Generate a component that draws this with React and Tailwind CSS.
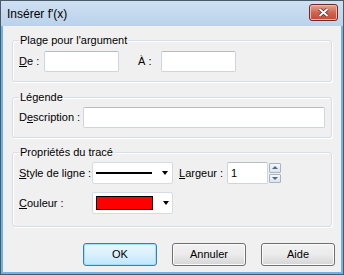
import React from "react";

const font = { fontFamily: '"Liberation Sans", Arial, sans-serif' };

function Combo({ children }) {
  return (
    <div className="flex h-[22px] w-[81px] items-center rounded-[2px] border border-[#d4dbe3] bg-white pl-[3px] pr-[4px]">
      <div className="flex flex-1 items-center">{children}</div>
      <div className="ml-[10px] h-0 w-0 border-x-[3.5px] border-t-[4px] border-x-transparent border-t-black" />
    </div>
  );
}

function Group({ title, className, children }) {
  return (
    <fieldset
      className={`mx-[9px] rounded-[3px] border border-[#d5dfe5] px-[6px] shadow-[inset_1px_1px_0_#fff,1px_1px_0_#fff] ${className}`}
    >
      <legend className="px-[1px] text-[11px] leading-[15px]">{title}</legend>
      {children}
    </fieldset>
  );
}

function TextBox({ className, children }) {
  return (
    <div
      className={`flex h-[21px] items-center rounded-[2px] border border-[#cdd5de] border-t-[#b5bdc6] bg-white px-[3px] text-[11px] ${className}`}
    >
      {children}
    </div>
  );
}

function Button({ primary, children }) {
  return (
    <div
      className={`flex h-[23px] w-[74px] items-center justify-center rounded-[3px] border text-[11px] ${
        primary
          ? "border-[#3c7fb1] bg-gradient-to-b from-[#eaf6fd] via-[#d9f0fc] to-[#bee6fd] shadow-[inset_0_0_0_1px_#9ee0f8]"
          : "border-[#707070] bg-gradient-to-b from-[#f2f2f2] via-[#ebebeb] to-[#d5d5d5] shadow-[inset_0_0_0_1px_#fcfcfc]"
      }`}
    >
      {children}
    </div>
  );
}

export default function App() {
  return (
    <div
      style={font}
      className="flex h-[275px] w-[344px] flex-col border border-[#4a5a6b] bg-[#6fb3e4] text-black"
    >
      {/* Barre de titre */}
      <div className="flex h-[25px] items-center justify-between bg-gradient-to-b from-[#cfe0f2] to-[#bad2ea] pl-[6px] pr-[5px]">
        <span className="text-[12px]">Insérer f'(x)</span>
        <div className="mb-[3px] flex h-[17px] w-[29px] items-center justify-center rounded-[3px] border border-[#6d2a2a] bg-gradient-to-b from-[#e8a492] via-[#d0654f] to-[#c24a35] shadow-[inset_0_0_0_1px_#f0b9ad]">
          <svg width="11" height="9" viewBox="0 0 11 9">
            <path d="M1.5 1 L9.5 8 M9.5 1 L1.5 8" stroke="#4a2a2a" strokeWidth="3.4" />
            <path d="M1.5 1 L9.5 8 M9.5 1 L1.5 8" stroke="#fff" strokeWidth="2" />
          </svg>
        </div>
      </div>

      {/* Zone client */}
      <div className="mx-[2px] mb-[2px] flex flex-1 flex-col bg-[#f0f0f0] pt-[7px]">
        <Group title="Plage pour l'argument" className="pb-[9px]">
          <div className="mt-[3px] flex items-center text-[11px]">
            <span className="w-[25px]">
              <span className="underline">D</span>e :
            </span>
            <TextBox className="w-[75px]" />
            <span className="ml-[19px] w-[23px]">À :</span>
            <TextBox className="w-[75px]" />
          </div>
        </Group>

        <Group title="Légende" className="mt-[8px] pb-[9px]">
          <div className="mt-[2px] flex items-center text-[11px]">
            <span className="w-[64px]">
              D<span className="underline">e</span>scription :
            </span>
            <TextBox className="w-[242px]" />
          </div>
        </Group>

        <Group title="Propriétés du tracé" className="mt-[7px] pb-[12px]">
          <div className="mt-[2px] flex items-center text-[11px]">
            <span className="w-[73px]">
              <span className="underline">S</span>tyle de ligne :
            </span>
            <Combo>
              <div className="h-[2px] w-[56px] bg-black" />
            </Combo>
            <span className="ml-[6px] w-[48px]">
              <span className="underline">L</span>argeur :
            </span>
            <TextBox className="h-[22px] w-[41px]">1</TextBox>
            <div className="ml-[1px] flex h-[20px] w-[12px] flex-col gap-[1px]">
              <div className="flex flex-1 items-center justify-center rounded-[1px] border border-[#a9b4c0] bg-gradient-to-b from-[#f4f7fa] to-[#dde4ec]">
                <div className="h-0 w-0 border-x-[3px] border-b-[3px] border-x-transparent border-b-[#4f6a8a]" />
              </div>
              <div className="flex flex-1 items-center justify-center rounded-[1px] border border-[#a9b4c0] bg-gradient-to-b from-[#f4f7fa] to-[#dde4ec]">
                <div className="h-0 w-0 border-x-[3px] border-t-[3px] border-x-transparent border-t-[#4f6a8a]" />
              </div>
            </div>
          </div>
          <div className="mt-[8px] flex items-center text-[11px]">
            <span className="w-[73px]">
              <span className="underline">C</span>ouleur :
            </span>
            <Combo>
              <div className="h-[14px] w-[57px] border border-black bg-[#ff0000]" />
            </Combo>
          </div>
        </Group>

        <div className="mt-auto mb-[6px] flex justify-end gap-[15px] pr-[6px]">
          <Button primary>OK</Button>
          <Button>Annuler</Button>
          <Button>Aide</Button>
        </div>
      </div>
    </div>
  );
}
